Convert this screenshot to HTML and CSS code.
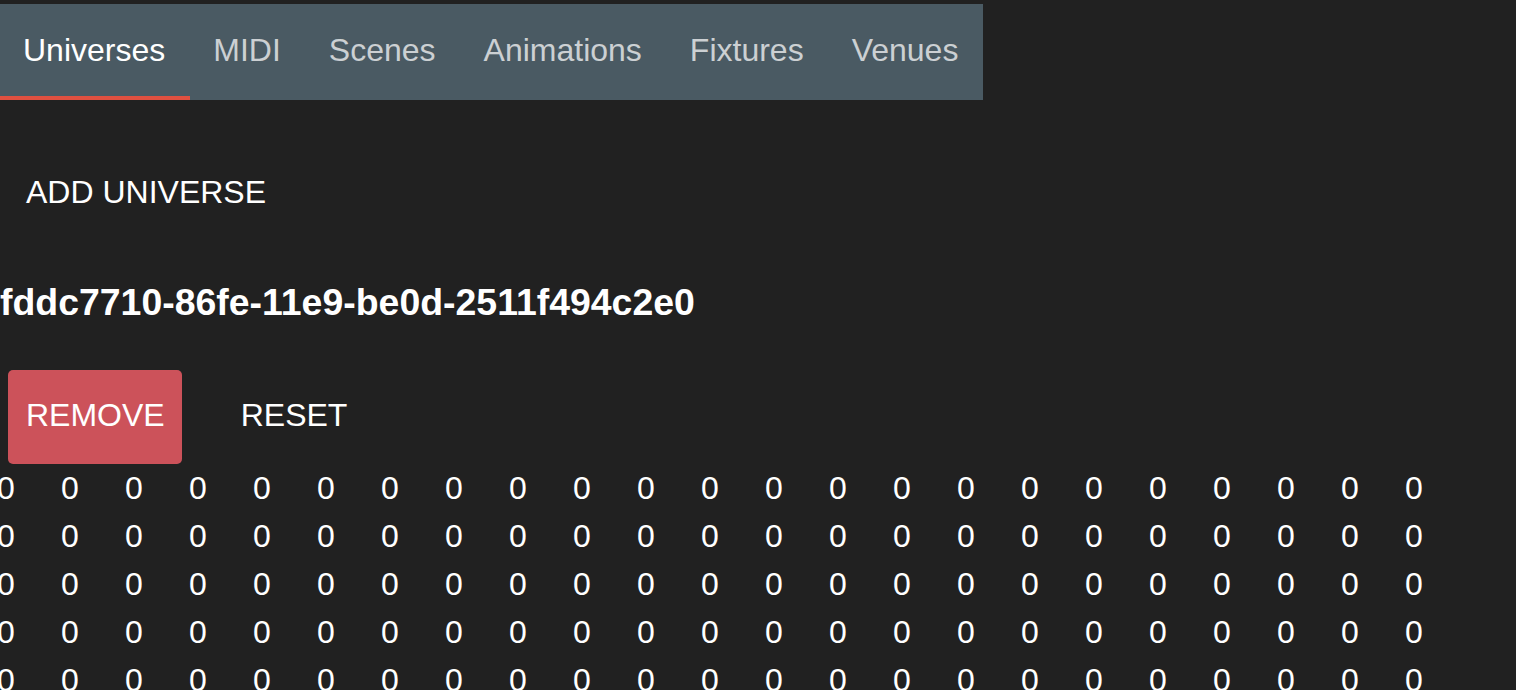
FILE: index.html
```html
<!DOCTYPE html>
<html lang="en">
<head>
<meta charset="utf-8">
<title>Universes</title>
<link rel="stylesheet" href="styles.css">
</head>
<body>
<nav class="tabs">
  <div class="tab active">Universes</div>
  <div class="tab">MIDI</div>
  <div class="tab">Scenes</div>
  <div class="tab">Animations</div>
  <div class="tab">Fixtures</div>
  <div class="tab">Venues</div>
</nav>
<main class="content">
  <div class="toolbar">
    <button class="btn btn-text">ADD UNIVERSE</button>
  </div>
  <section class="universe">
    <h3 class="universe-title">fddc7710-86fe-11e9-be0d-2511f494c2e0</h3>
    <div class="actions">
      <button class="btn btn-danger">REMOVE</button>
      <button class="btn btn-text">RESET</button>
    </div>
    <div class="channels">
      <span class="ch">0</span><span class="ch">0</span><span class="ch">0</span><span class="ch">0</span><span class="ch">0</span><span class="ch">0</span><span class="ch">0</span><span class="ch">0</span><span class="ch">0</span><span class="ch">0</span><span class="ch">0</span><span class="ch">0</span><span class="ch">0</span><span class="ch">0</span><span class="ch">0</span><span class="ch">0</span><span class="ch">0</span><span class="ch">0</span><span class="ch">0</span><span class="ch">0</span><span class="ch">0</span><span class="ch">0</span><span class="ch">0</span>
      <span class="ch">0</span><span class="ch">0</span><span class="ch">0</span><span class="ch">0</span><span class="ch">0</span><span class="ch">0</span><span class="ch">0</span><span class="ch">0</span><span class="ch">0</span><span class="ch">0</span><span class="ch">0</span><span class="ch">0</span><span class="ch">0</span><span class="ch">0</span><span class="ch">0</span><span class="ch">0</span><span class="ch">0</span><span class="ch">0</span><span class="ch">0</span><span class="ch">0</span><span class="ch">0</span><span class="ch">0</span><span class="ch">0</span>
      <span class="ch">0</span><span class="ch">0</span><span class="ch">0</span><span class="ch">0</span><span class="ch">0</span><span class="ch">0</span><span class="ch">0</span><span class="ch">0</span><span class="ch">0</span><span class="ch">0</span><span class="ch">0</span><span class="ch">0</span><span class="ch">0</span><span class="ch">0</span><span class="ch">0</span><span class="ch">0</span><span class="ch">0</span><span class="ch">0</span><span class="ch">0</span><span class="ch">0</span><span class="ch">0</span><span class="ch">0</span><span class="ch">0</span>
      <span class="ch">0</span><span class="ch">0</span><span class="ch">0</span><span class="ch">0</span><span class="ch">0</span><span class="ch">0</span><span class="ch">0</span><span class="ch">0</span><span class="ch">0</span><span class="ch">0</span><span class="ch">0</span><span class="ch">0</span><span class="ch">0</span><span class="ch">0</span><span class="ch">0</span><span class="ch">0</span><span class="ch">0</span><span class="ch">0</span><span class="ch">0</span><span class="ch">0</span><span class="ch">0</span><span class="ch">0</span><span class="ch">0</span>
      <span class="ch">0</span><span class="ch">0</span><span class="ch">0</span><span class="ch">0</span><span class="ch">0</span><span class="ch">0</span><span class="ch">0</span><span class="ch">0</span><span class="ch">0</span><span class="ch">0</span><span class="ch">0</span><span class="ch">0</span><span class="ch">0</span><span class="ch">0</span><span class="ch">0</span><span class="ch">0</span><span class="ch">0</span><span class="ch">0</span><span class="ch">0</span><span class="ch">0</span><span class="ch">0</span><span class="ch">0</span><span class="ch">0</span>
    </div>
  </section>
</main>
</body>
</html>
```

FILE: styles.css
```css
html {
  overflow: hidden;
}

body {
  margin: 0;
  padding-top: 4px;
  background: #212121;
  color: #ffffff;
  font-family: "Liberation Sans", Arial, Helvetica, sans-serif;
  font-size: 32px;
}

.tabs {
  display: inline-flex;
  background: #4a5a63;
}

.tab {
  box-sizing: border-box;
  height: 96px;
  padding: 0 25px 0 23px;
  display: flex;
  align-items: center;
  border-bottom: 4px solid transparent;
  color: rgba(255, 255, 255, 0.72);
  white-space: nowrap;
}

.tab.active {
  color: #ffffff;
  border-bottom-color: #e05040;
}

.toolbar {
  padding: 47px 0 0 8px;
}

.btn {
  box-sizing: border-box;
  height: 94px;
  padding: 0 17px 4px 18px;
  display: inline-flex;
  align-items: center;
  border: 0;
  border-radius: 5px;
  background: transparent;
  color: #ffffff;
  font-family: inherit;
  font-size: 32px;
  text-transform: uppercase;
}

.btn-danger {
  background: #cc525a;
}

.universe-title {
  margin: 40px 0 46px;
  font-size: 37.44px;
  font-weight: bold;
  line-height: 43px;
}

.actions {
  display: flex;
  gap: 41px;
  padding-left: 8px;
}

.channels {
  display: flex;
  flex-wrap: wrap;
  margin-left: -3px;
  width: 1480px;
}

.ch {
  width: 64px;
  line-height: 48px;
}
```
